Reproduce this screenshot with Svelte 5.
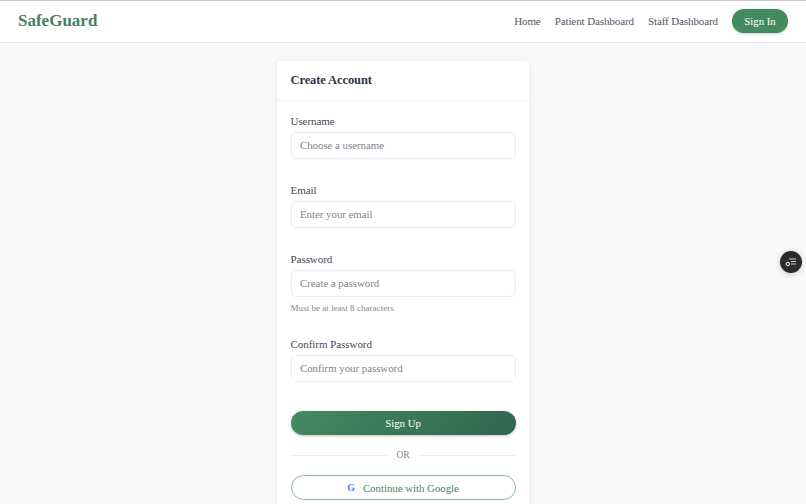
<script>
  let username = '';
  let email = '';
  let password = '';
  let confirm = '';
</script>

<div class="page">
  <nav class="navbar">
    <a class="brand" href="#home">SafeGuard</a>
    <div class="nav-links">
      <a href="#home">Home</a>
      <a href="#patient">Patient Dashboard</a>
      <a href="#staff">Staff Dashboard</a>
      <button class="signin">Sign In</button>
    </div>
  </nav>

  <main class="content">
    <section class="card">
      <header class="card-header">
        <h1>Create Account</h1>
      </header>
      <form class="card-body" on:submit|preventDefault>
        <div class="field">
          <label for="username">Username</label>
          <input id="username" type="text" placeholder="Choose a username" bind:value={username} />
        </div>
        <div class="field">
          <label for="email">Email</label>
          <input id="email" type="email" placeholder="Enter your email" bind:value={email} />
        </div>
        <div class="field">
          <label for="password">Password</label>
          <input id="password" type="password" placeholder="Create a password" bind:value={password} />
          <small>Must be at least 8 characters</small>
        </div>
        <div class="field">
          <label for="confirm">Confirm Password</label>
          <input id="confirm" type="password" placeholder="Confirm your password" bind:value={confirm} />
        </div>
        <button class="submit" type="submit">Sign Up</button>
        <div class="divider"><span>OR</span></div>
        <button class="google" type="button"><b>G</b>Continue with Google</button>
      </form>
    </section>
  </main>

  <button class="float" aria-label="Preferences">
    <svg width="12" height="12" viewBox="0 0 12 12" fill="none" stroke="#fff" stroke-width="1">
      <circle cx="2.8" cy="8" r="1.7" />
      <path d="M4 3h7M6 5.5h5M6 8h5" stroke="#c9c9c9" />
    </svg>
  </button>
</div>

<style>
  :global(body) {
    margin: 0;
    background: #f8f9fa;
    overflow: hidden;
  }

  .page {
    height: 504px;
    overflow: hidden;
    font-family: "Liberation Serif", "DejaVu Serif", serif;
    color: #2d3748;
  }

  .navbar {
    display: flex;
    align-items: center;
    justify-content: space-between;
    height: 41px;
    padding: 0 18px;
    background: #fff;
    border-top: 1px solid #c8c8c8;
    border-bottom: 1px solid #e5e7eb;
  }

  .brand {
    margin-top: -2px;
    font-size: 17px;
    font-weight: 700;
    color: #47805f;
    text-decoration: none;
  }

  .nav-links {
    display: flex;
    align-items: center;
    gap: 14px;
    margin-top: -2px;
  }

  .nav-links a {
    font-size: 11px;
    letter-spacing: -0.1px;
    color: #4f5866;
    text-decoration: none;
  }

  .signin {
    width: 56px;
    height: 24px;
    padding: 0;
    border: none;
    border-radius: 12px;
    background: #448a5f;
    box-shadow: 0 1px 3px rgba(0, 0, 0, 0.2);
    color: #fff;
    font: inherit;
    font-size: 10.8px;
  }

  .content {
    display: flex;
    justify-content: center;
    padding-top: 18px;
  }

  .card {
    width: 252px;
    background: #fff;
    border-radius: 4px;
    box-shadow: 0 2px 8px rgba(0, 0, 0, 0.07);
  }

  .card-header {
    height: 40px;
    display: flex;
    align-items: center;
    padding: 0 13.5px;
    border-bottom: 1px solid #eef0f2;
    box-sizing: border-box;
  }

  h1 {
    margin: 0;
    font-size: 12.5px;
    font-weight: 700;
    letter-spacing: -0.1px;
    color: #2d3748;
  }

  .card-body {
    padding: 14px 13.5px 13px;
  }

  .field {
    display: flex;
    flex-direction: column;
    margin-bottom: 25px;
  }

  label {
    font-size: 11px;
    letter-spacing: -0.05px;
    line-height: 13px;
    margin-bottom: 4px;
    color: #434a58;
  }

  input {
    height: 27px;
    box-sizing: border-box;
    padding: 0 8.5px 2px;
    border: 1px solid #eceef1;
    border-radius: 5px;
    background: #fff;
    font: inherit;
    font-size: 10.8px;
    outline: none;
  }

  input::placeholder {
    color: #7d8490;
    opacity: 1;
  }

  small {
    margin-top: 5px;
    margin-bottom: -1px;
    font-size: 9.1px;
    line-height: 12px;
    color: #848b97;
  }

  .submit {
    display: block;
    width: 100%;
    height: 24px;
    margin-top: 29px;
    padding: 0;
    border: none;
    border-radius: 12px;
    background: linear-gradient(135deg, #448a5f, #2f6650);
    box-shadow: 0 1px 3px rgba(0, 0, 0, 0.25);
    color: #fff;
    font: inherit;
    font-size: 10.8px;
  }

  .divider {
    display: flex;
    align-items: center;
    gap: 9px;
    margin: 14px 0 14px;
    font-size: 9.5px;
    line-height: 12px;
    color: #7d8490;
  }

  .divider::before,
  .divider::after {
    content: '';
    flex: 1;
    height: 1px;
    background: #eceef0;
  }

  .google {
    display: flex;
    align-items: center;
    justify-content: center;
    gap: 8px;
    width: 100%;
    height: 25px;
    padding: 0;
    border: 1px solid #8fb5a0;
    border-radius: 13px;
    background: #fff;
    color: #4a7f62;
    font: inherit;
    font-size: 10.8px;
  }

  .google b {
    color: #5b7fd0;
    font-size: 10px;
  }

  .float {
    position: fixed;
    top: 251px;
    right: 4px;
    width: 22px;
    height: 22px;
    padding: 0;
    display: flex;
    align-items: center;
    justify-content: center;
    border: none;
    border-radius: 50%;
    background: #2b2b2b;
    box-shadow: 0 1px 6px rgba(0, 0, 0, 0.2);
  }
</style>
